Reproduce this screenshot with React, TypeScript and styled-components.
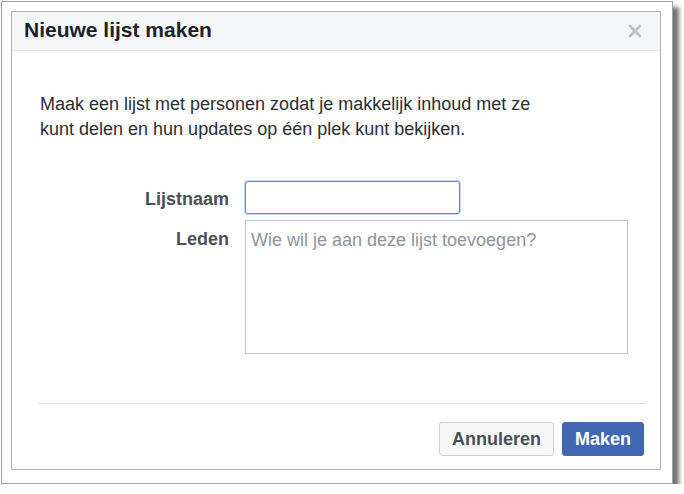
import styled, { createGlobalStyle } from 'styled-components';

const GlobalStyle = createGlobalStyle`
  html, body {
    margin: 0;
    padding: 0;
    background: #ffffff;
  }
  body {
    font-family: 'Liberation Sans', Arial, sans-serif;
  }
`;

const Frame = styled.div`
  box-sizing: border-box;
  width: 672px;
  height: 483px;
  margin: 1px 0 0 1px;
  padding: 9px 10px 12px 9px;
  border: 1px solid #a3a3a3;
  background: #ffffff;
  box-shadow: 6px 6px 4px rgba(0, 0, 0, 0.55);
`;

const Dialog = styled.div`
  box-sizing: border-box;
  width: 650px;
  height: 459px;
  border: 1px solid #b4b4b4;
  display: flex;
  flex-direction: column;
`;

const Header = styled.div`
  height: 38px;
  background: #f5f6f7;
  border-bottom: 1px solid #e2e3e5;
  display: flex;
  align-items: center;
  justify-content: space-between;
  padding: 0 18px 0 12px;
`;

const Title = styled.h1`
  margin: 0 0 2px;
  font-size: 21px;
  font-weight: bold;
  color: #1d2129;
`;

const Close = styled.button`
  border: none;
  background: none;
  padding: 0;
  width: 14px;
  height: 14px;
  display: flex;
  cursor: pointer;
`;

const Body = styled.div`
  flex: 1;
  padding: 41px 32px 0 28px;
`;

const Intro = styled.p`
  margin: 0 0 39px;
  font-size: 18px;
  line-height: 25px;
  color: #2b2e33;
`;

const Form = styled.div`
  display: grid;
  grid-template-columns: 189px 1fr;
  column-gap: 16px;
  row-gap: 6px;
  align-items: start;
`;

const Label = styled.label<{ $top: number }>`
  text-align: right;
  font-size: 18px;
  font-weight: bold;
  color: #4b4f56;
  padding-top: ${({ $top }) => $top}px;
`;

const TextInput = styled.input`
  box-sizing: border-box;
  width: 215px;
  height: 33px;
  border: 1px solid #5d83e0;
  border-radius: 3px;
  box-shadow: 0 0 0 1px rgba(93, 131, 224, 0.35);
  outline: none;
  font-family: inherit;
  font-size: 18px;
`;

const TextArea = styled.textarea`
  box-sizing: border-box;
  width: 383px;
  height: 134px;
  border: 1px solid #bdc7d8;
  padding: 9px 5px;
  resize: none;
  outline: none;
  font-family: inherit;
  font-size: 18px;
  line-height: 21px;
  color: #1d2129;

  &::placeholder {
    color: #8d949e;
  }
`;

const Footer = styled.div`
  margin: 0 14px 0 26px;
  border-top: 1px solid #dddfe2;
  display: flex;
  justify-content: flex-end;
  gap: 8px;
  padding: 18px 2px 13px 0;
`;

const Button = styled.button<{ $primary?: boolean }>`
  box-sizing: border-box;
  height: 34px;
  padding: 0 12px;
  border-radius: 3px;
  font-family: inherit;
  font-size: 18px;
  font-weight: bold;
  cursor: pointer;
  border: 1px solid ${({ $primary }) => ($primary ? '#4267b2' : '#ced0d4')};
  background: ${({ $primary }) => ($primary ? '#4267b2' : '#f6f7f9')};
  color: ${({ $primary }) => ($primary ? '#ffffff' : '#4b4f56')};
`;

export default function App() {
  return (
    <>
      <GlobalStyle />
      <Frame>
        <Dialog>
          <Header>
            <Title>Nieuwe lijst maken</Title>
            <Close aria-label="Sluiten">
              <svg width="14" height="14" viewBox="0 0 14 14">
                <path d="M2 2 L12 12 M12 2 L2 12" stroke="#bcc0c7" strokeWidth="2.6" strokeLinecap="round" />
              </svg>
            </Close>
          </Header>
          <Body>
            <Intro>
              Maak een lijst met personen zodat je makkelijk inhoud met ze
              <br />
              kunt delen en hun updates op één plek kunt bekijken.
            </Intro>
            <Form>
              <Label $top={8}>Lijstnaam</Label>
              <TextInput type="text" />
              <Label $top={9}>Leden</Label>
              <TextArea placeholder="Wie wil je aan deze lijst toevoegen?" />
            </Form>
          </Body>
          <Footer>
            <Button>Annuleren</Button>
            <Button $primary>Maken</Button>
          </Footer>
        </Dialog>
      </Frame>
    </>
  );
}
